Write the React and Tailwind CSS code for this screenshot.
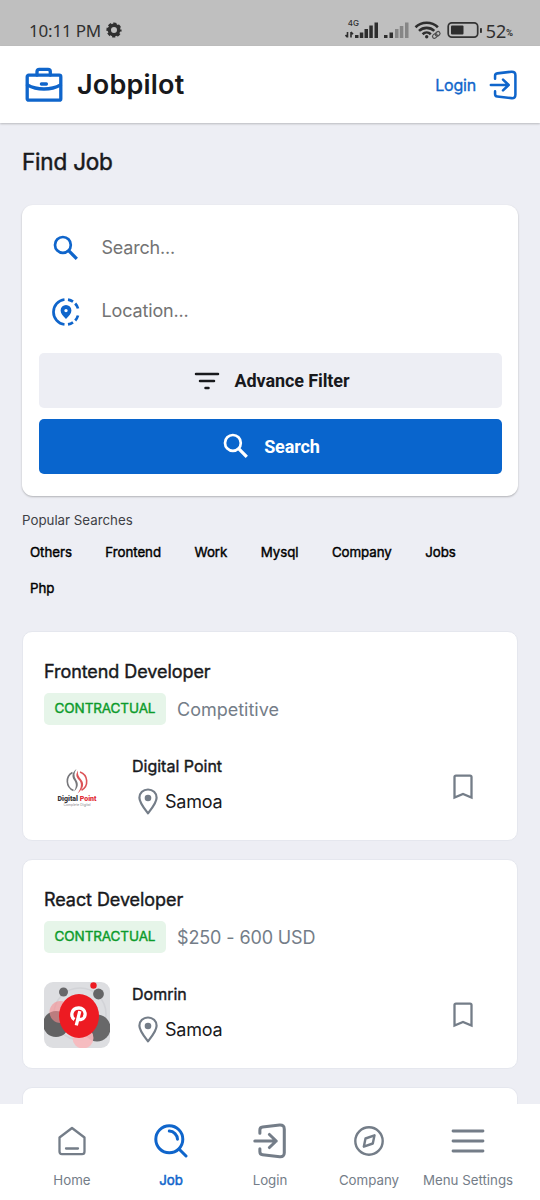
import React from "react";

function Gear() {
  return (
    <svg className="mb-px ml-[5px] size-[16px]" viewBox="0 0 16 16" fill="none" stroke="#303030">
      <circle cx="8" cy="8" r="4.700" strokeWidth="3.400" />
      <circle cx="8" cy="8" r="6.500" strokeWidth="2.200" strokeDasharray="3.100 2.005" strokeDashoffset="1.500" />
    </svg>
  );
}

function StatusIcons() {
  return (
    <svg className="h-[20px] w-[138px] shrink-0" viewBox="0 0 138 20" fill="#2e2e2e">
      <path d="M2.500 11v5.500M0.500 14l2 2.200M6 16.500v-5.500M6 11l2 2.200" stroke="#2e2e2e" strokeWidth="1.600" fill="none" />
      <rect x="10" y="14" width="3.500" height="3" />
      <rect x="14.800" y="11.500" width="3.500" height="5.500" />
      <rect x="19.500" y="8" width="3.500" height="9" />
      <rect x="24.300" y="4.500" width="3.500" height="12.500" />
      <rect x="29.500" y="1.500" width="3.500" height="15.500" />
      <rect x="39" y="14" width="3.500" height="3" />
      <rect x="44.500" y="11.500" width="3.500" height="5.500" />
      <g fill="#868686">
        <rect x="50" y="8" width="3.500" height="9" />
        <rect x="54.800" y="5" width="3.500" height="12" />
        <rect x="60" y="1.500" width="3.500" height="15.500" />
      </g>
      <g fill="none" stroke="#2e2e2e" strokeWidth="2.600">
        <path d="M70.500 6.300c6.200-6 16.200-6 22.400 0M74 9.900c4.300-4 11-4 15.300 0M77.600 13.200c2.300-2.200 5.900-2.200 8.200 0" />
        <circle cx="81.700" cy="15.700" r="1.700" fill="#2e2e2e" stroke="none" />
      </g>
      <g transform="rotate(-38 91 14)" fill="none" stroke="#4c4c4c" strokeWidth="1.200">
        <rect x="87" y="12.200" width="5" height="3.800" rx="1.900" />
        <rect x="90.500" y="12.200" width="5" height="3.800" rx="1.900" />
      </g>
      <rect x="103.200" y="1.900" width="29.500" height="14.200" rx="3.600" fill="none" stroke="#333" strokeWidth="1.700" />
      <rect x="106" y="4.500" width="12.500" height="9" rx="1" />
      <rect x="135" y="7" width="1.900" height="5" rx=".8" />
    </svg>
  );
}

function Briefcase() {
  return (
    <svg className="h-[36px] w-[38px]" viewBox="0 0 38 36" fill="none" stroke="#0f65cb" strokeWidth="3.300" strokeLinejoin="round" strokeLinecap="round">
      <rect x="2.200" y="8.200" width="33.600" height="25" rx="1.500" />
      <path d="M12 8V4.500Q12 2.400 14.200 2.400H23Q25.300 2.400 25.300 4.500V8" />
      <path d="M2.400 18C12 23.300 26 23.300 35.500 18M16.400 17h5" />
    </svg>
  );
}

function LoginIcon({ className }) {
  return (
    <svg className={className} viewBox="0 0 30 32" fill="none" stroke="currentColor" strokeWidth="2.700" strokeLinecap="round" strokeLinejoin="round">
      <path d="M6 9.200V6.200Q6 3.900 8.400 3.600L23.600 1.800Q27.700 1.600 27.700 5.500V26.500Q27.700 30.300 23.700 30L8.400 28.300Q6 28 6 25.600V22.800" />
      <path d="M1.500 16H20.500M14.500 10.200L20.500 16L14.500 21.800" />
    </svg>
  );
}

function Magnifier({ className }) {
  return (
    <svg className={className} viewBox="0 0 26 26" fill="none" stroke="currentColor" strokeLinecap="butt">
      <circle cx="9.900" cy="9.900" r="7.900" strokeWidth="2.700" />
      <path d="M15.400 15.400L23.800 23.800" strokeWidth="3.300" />
    </svg>
  );
}

function LocationTarget() {
  return (
    <svg className="size-[28px]" viewBox="0 0 28 28" fill="none">
      <path d="M12.500 1.500A12.600 12.600 0 0 0 12.500 26.500M16 1.600A12.600 12.600 0 0 1 21 3.600M23.200 5.500A12.600 12.600 0 0 1 26 10.500M26 17.500A12.600 12.600 0 0 1 23.200 22.500M21 24.400A12.600 12.600 0 0 1 16 26.400" stroke="#0f65cb" strokeWidth="2.700" />
      <path fillRule="evenodd" fill="#0f65cb" d="M14 21C11 18 8.600 15.500 8.600 12.500A5.400 5.500 0 0 1 19.400 12.500C19.400 15.500 17 18 14 21ZM14 10.900a1.700 1.700 0 1 0 0 3.400a1.700 1.700 0 0 0 0-3.400Z" />
    </svg>
  );
}

function Pin() {
  return (
    <svg className="h-[28px] w-[20px]" viewBox="0 0 20 28" fill="none">
      <path d="M10 25.300C5.500 19.400 1.400 14.600 1.400 9.700C1.400 4.900 5.200 1.500 10 1.500S18.600 4.900 18.600 9.700C18.600 14.600 14.500 19.400 10 25.300Z" stroke="#747d88" strokeWidth="2.200" strokeLinejoin="round" />
      <circle cx="10" cy="10" r="3.300" fill="#747d88" />
    </svg>
  );
}

function Bookmark() {
  return (
    <svg className="h-[26px] w-[20px]" viewBox="0 0 20 26" fill="none" stroke="#747d88" strokeWidth="2.300">
      <path d="M1.500 23.500V3Q1.500 1.600 3 1.600H17Q18.500 1.600 18.500 3V23.500L10 19.900Z" />
    </svg>
  );
}

function DigitalLogo() {
  return (
    <div className="flex size-[66px] flex-col items-center pt-[13px]">
      <svg className="h-[28px] w-[26px]" viewBox="0 0 26 28" fill="none">
        <path d="M8.500 5.500A10 10 0 0 0 9.500 23.500" stroke="#77777b" strokeWidth="1.600" />
        <path d="M12.500 2C8 5.500 7.500 9.500 10 13C12.500 16.500 12.500 20 10 24.500C14.500 20.500 14.800 16.500 12 12.500C9.800 9 10 5.500 12.500 2Z" fill="#77777b" />
        <path d="M16 5A10 10 0 0 1 17.500 23.200" stroke="#dc5357" strokeWidth="1.600" />
        <path d="M14 3.500C11.500 7.500 12 10 15 13C18 16.500 17.500 21 13.500 26.500C19.500 21.500 20.500 17 17.500 13C14.500 9.500 13.300 7 14 3.500Z" fill="#dc5357" />
      </svg>
      <div className="h-[8px] whitespace-nowrap font-['Roboto',sans-serif] text-[7px] leading-[8px] font-black text-[#353537]">Digital <span className="text-[#e12b35]">Point</span></div>
      <div className="h-[3px] whitespace-nowrap font-['Inter',sans-serif] text-[3.500px] leading-[4px] text-[#8b8b90]">Complete Digital</div>
    </div>
  );
}

function DomrinLogo() {
  return (
    <svg className="size-[66px] rounded-[9px]" viewBox="0 0 66 66">
      <rect width="66" height="66" fill="#dddee1" />
      <circle cx="36" cy="32" r="26" fill="none" stroke="#d2d3d7" strokeWidth="1.500" />
      <circle cx="19.500" cy="10" r="4.500" fill="#68686a" />
      <circle cx="54.500" cy="12" r="5.400" fill="#656566" />
      <circle cx="49.500" cy="3.500" r="3.200" fill="#ed1b22" />
      <circle cx="12" cy="42" r="13" fill="#626263" />
      <circle cx="53" cy="46" r="13.500" fill="#686869" />
      <circle cx="16.500" cy="30" r="11" fill="#f98e91" fillOpacity=".6" />
      <circle cx="39" cy="56" r="10.500" fill="#f8b8bd" fillOpacity=".9" />
      <ellipse cx="35" cy="34" rx="20" ry="22" fill="#ed1b22" />
      <path d="M30.500 37.500C26.500 35 26.500 26.500 34.500 26C42.500 25.500 43 36 37.300 37.400C35 38 34 36.500 33.500 35.300M35.800 29.200L32.300 43.300" fill="none" stroke="#fff" strokeWidth="3.300" />
    </svg>
  );
}

function JobCard({ title, pay, company, logo, payClass }) {
  return (
    <article className="h-[210px] shrink-0 rounded-[10px] border border-[#e5e7ee] bg-white pt-[26px] pr-[20px] pl-[21px]">
      <h2 className="h-[28px] text-[18px] leading-[28px] tracking-[-.07px] text-[#18191c] [-webkit-text-stroke:0.4px]">{title}</h2>
      <div className="mt-[7px] flex h-[32px] items-center">
        <span className="flex h-[32px] w-[122px] shrink-0 items-center justify-center rounded-[5px] bg-[#e6f5e9] pb-[2px] text-[13.500px] leading-[20px] tracking-[-.1px] text-[#0c9b2b] [-webkit-text-stroke:0.4px]">CONTRACTUAL</span>
        <span className={payClass}>{pay}</span>
      </div>
      <div className="mt-[29px] flex h-[66px]">
        {logo}
        <div className="ml-[22px] flex-1">
          <div className="h-[28px] text-[16px] leading-[24px] [-webkit-text-stroke:0.4px]">{company}</div>
          <div className="mt-[6px] flex h-[28px] items-center pl-[6px] text-[18px] leading-[28px] tracking-[-.2px] text-[#18191c]"><Pin /><span className="ml-[7px]">Samoa</span></div>
        </div>
        <button aria-label="Save job" className="mr-[24px] self-center"><Bookmark /></button>
      </div>
    </article>
  );
}

function NavItem({ label, active, children }) {
  return (
    <button className={active ? "flex w-[99px] flex-col items-center text-[#0f65cb] [&>span:last-child]:[-webkit-text-stroke:0.5px]" : "flex w-[99px] flex-col items-center text-[#747d88]"}>
      <span className="flex h-[44px] items-center justify-center">{children}</span>
      <span className="mt-[7px] text-[13.300px] leading-[20px] whitespace-nowrap">{label}</span>
    </button>
  );
}

export default function App() {
  return (
    <div className="flex h-[1200px] w-[540px] flex-col overflow-hidden bg-[#edeef4] font-['Inter',sans-serif] text-[#18191c]">
      <div className="flex h-[46px] shrink-0 items-center bg-[#bfbfbf] pt-[15px] pr-[27px] pl-[29px] text-[#303030]">
        <span className="font-['Noto_Sans',sans-serif] text-[17px] leading-[24px] tracking-[-.2px]">10:11 PM</span>
        <Gear />
        <div className="relative ml-auto flex items-center">
          <span className="absolute top-[-1px] left-[3px] text-[8px] leading-[10px] font-medium">4G</span>
          <StatusIcons />
          <span className="ml-[3px] font-['Noto_Sans',sans-serif] text-[18px] leading-[24px] tracking-[-.2px]">52</span><span className="w-[7px] pt-[4px] font-['Roboto',sans-serif] text-[9.500px] leading-[12px] font-bold">%</span>
        </div>
      </div>
      <header className="flex h-[77px] shrink-0 items-center bg-white pr-[22px] pl-[25px] shadow-[0_1px_2px_rgba(0,0,0,0.22)]">
        <Briefcase />
        <span className="ml-[14px] text-[27px] leading-[36px] font-semibold tracking-[.2px]">Jobpilot</span>
        <button className="ml-auto flex items-center text-[16px] leading-[24px] tracking-[-.2px] text-[#0f65cb] [-webkit-text-stroke:0.35px]">Login<LoginIcon className="ml-[13px] h-[30px] w-[29px]" /></button>
      </header>
      <main className="flex min-h-0 flex-1 flex-col overflow-hidden px-[22px]">
        <h1 className="mt-[23px] h-[32px] shrink-0 text-[22.500px] leading-[32px] tracking-[-.2px] [-webkit-text-stroke:0.5px]">Find Job</h1>
        <section className="mt-[27px] flex h-[291px] shrink-0 flex-col rounded-[11px] bg-white px-[16.500px] pt-[17px] shadow-[0_1px_2px_rgba(0,0,0,0.25)]">
          <label className="flex h-[52px] items-center pl-[13px] text-[#737373]"><Magnifier className="ml-px size-[26px] text-[#0f65cb]" /><span className="ml-[23px] text-[18px] leading-[28px] tracking-[-.2px]">Search...</span></label>
          <label className="mt-[11px] flex h-[54px] items-center pl-[13px] text-[#737373]"><LocationTarget /><span className="ml-[22px] pb-[2px] text-[18px] leading-[28px] tracking-[-.15px]">Location...</span></label>
          <button className="mt-[14px] flex h-[55px] shrink-0 items-center justify-center rounded-[5px] bg-[#edeef4] pl-[3px] font-['Roboto',sans-serif] text-[18px] font-bold tracking-[-.1px]">
            <svg className="mr-[15px] h-[18px] w-[26px]" viewBox="0 0 26 18" fill="none" stroke="#18191c" strokeWidth="2.500" strokeLinecap="round"><path d="M2 2h22M6 9h14M11.500 16h3" /></svg>
            Advance Filter
          </button>
          <button className="mt-[11px] flex h-[55px] shrink-0 items-center justify-center rounded-[5px] bg-[#0965cd] pl-[3px] font-['Roboto',sans-serif] text-[18px] font-bold tracking-[-.1px] text-white"><Magnifier className="mr-[15px] mb-[2px] size-[26px]" />Search</button>
        </section>
        <p className="mt-[14px] h-[20px] shrink-0 text-[13.300px] leading-[20px] text-[#3e4045]">Popular Searches</p>
        <div className="mt-[12px] mr-[30px] ml-[8px] flex h-[56px] shrink-0 flex-wrap content-between gap-x-[33.500px] text-[13.300px] leading-[20px] tracking-[-.05px] text-black [-webkit-text-stroke:0.4px]">
          {["Others", "Frontend", "Work", "Mysql", "Company", "Jobs", "Php"].map((tag) => <span key={tag}>{tag}</span>)}
        </div>
        <div className="mt-[33px] flex shrink-0 flex-col gap-[18px]">
          <JobCard title="Frontend Developer" pay="Competitive" company="Digital Point" logo={<DigitalLogo />} payClass="ml-[11px] pt-[2px] text-[18px] leading-[28px] text-[#747d88]" />
          <JobCard title="React Developer" pay="$250 - 600 USD" company="Domrin" logo={<DomrinLogo />} payClass="ml-[11px] pt-[2px] text-[18px] leading-[28px] tracking-[-.12px] text-[#747d88]" />
          <div className="h-[30px] rounded-t-[10px] border border-b-0 border-[#e5e7ee] bg-white" />
        </div>
      </main>
      <nav className="flex h-[96px] shrink-0 justify-center bg-white pt-[15px]">
        <NavItem label="Home"><svg className="h-[30px] w-[28px]" viewBox="0 0 28 30" fill="none" stroke="currentColor" strokeWidth="2.300" strokeLinecap="round" strokeLinejoin="round"><path d="M1.500 11.500L14 2L26.500 11.500V25.500Q26.500 28.200 24 28.200H4Q1.500 28.200 1.500 25.500ZM8 22.500H20" /></svg></NavItem>
        <NavItem label="Job" active><svg className="size-[34px]" viewBox="0 0 34 34" fill="none" stroke="currentColor" strokeWidth="3" strokeLinecap="round"><circle cx="15.300" cy="15.300" r="13.500" /><path d="M25.500 25.500L32 32M15.300 7.100A8.500 8.500 0 0 1 23.500 15.300" /></svg></NavItem>
        <NavItem label="Login"><LoginIcon className="h-[36px] w-[34px]" /></NavItem>
        <NavItem label="Company"><svg className="size-[32px]" viewBox="0 0 32 32" fill="none" stroke="currentColor" strokeWidth="2.400" strokeLinejoin="round"><circle cx="16" cy="16" r="13.700" /><path d="M21.500 10.300L19.800 18.500L10.800 21.700L12.500 13.500Z" /></svg></NavItem>
        <NavItem label="Menu Settings"><svg className="h-[24px] w-[34px]" viewBox="0 0 34 24" fill="none" stroke="currentColor" strokeWidth="2.800" strokeLinecap="round"><path d="M2 2H32M2 12H32M2 22H32" /></svg></NavItem>
      </nav>
    </div>
  );
}
